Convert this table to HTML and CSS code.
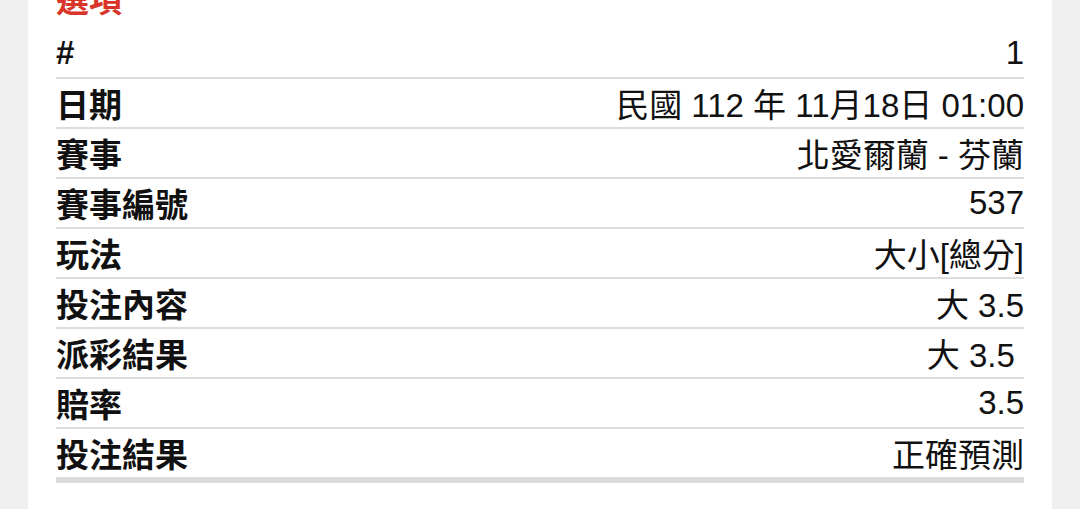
FILE: index.html
```html
<!DOCTYPE html>
<html lang="zh-Hant">
<head>
<meta charset="utf-8">
<link rel="stylesheet" href="styles.css">
</head>
<body>
<div class="page">
  <div class="card">
    <div class="title">選項</div>
    <div class="rows">
      <div class="row"><span class="label">#</span><span class="value">1</span></div>
      <div class="row"><span class="label">日期</span><span class="value">民國 112 年 11月18日 01:00</span></div>
      <div class="row"><span class="label">賽事</span><span class="value">北愛爾蘭 - 芬蘭</span></div>
      <div class="row"><span class="label">賽事編號</span><span class="value">537</span></div>
      <div class="row"><span class="label">玩法</span><span class="value">大小[總分]</span></div>
      <div class="row"><span class="label">投注內容</span><span class="value">大 3.5</span></div>
      <div class="row"><span class="label">派彩結果</span><span class="value">大 3.5 </span></div>
      <div class="row"><span class="label">賠率</span><span class="value">3.5</span></div>
      <div class="row last"><span class="label">投注結果</span><span class="value">正確預測</span></div>
    </div>
  </div>
</div>
</body>
</html>
```
FILE: styles.css
```css
html, body {
  margin: 0;
  padding: 0;
  height: 100%;
  overflow: hidden;
}
body {
  background: #efefef;
  font-family: "Liberation Sans", "Noto Sans CJK TC", sans-serif;
  color: #111;
}
.page {
  padding: 0 28px;
  height: 100%;
}
.card {
  display: flow-root;
  background: #fff;
  padding: 0 28px;
  height: 100%;
  box-sizing: border-box;
}
.title {
  color: #d9352a;
  font-weight: bold;
  font-size: 33px;
  line-height: 40px;
  margin-top: -19px;
  margin-bottom: 8px;
}
.row {
  display: flex;
  justify-content: space-between;
  align-items: center;
  height: 48px;
  border-bottom: 2px solid #dddddd;
}
.row.last {
  border-bottom: 6px solid #dcdcdc;
}
.label {
  font-weight: bold;
  font-size: 33px;
}
.value {
  white-space: pre;
  font-size: 33px;
}
```
